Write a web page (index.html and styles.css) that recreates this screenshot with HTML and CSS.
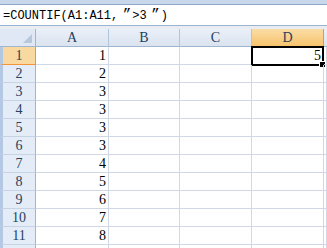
FILE: index.html
```html
<!DOCTYPE html>
<html>
<head>
<meta charset="utf-8">
<link rel="stylesheet" href="styles.css">
</head>
<body>
<div class="topband"></div>
<div class="fbar">=COUNTIF(A1:A11,<span class="fw">”</span>&gt;3<span class="fw">”</span>)</div>
<div class="gap"></div>
<div class="sheet">
  <div class="corner"><span class="tri"></span></div>
  <div class="ch">A</div><div class="ch">B</div><div class="ch">C</div><div class="ch sel">D</div><div class="ch last"></div>

  <div class="rh sel">1</div><div class="c">1</div><div class="c"></div><div class="c"></div><div class="c active">5<span class="handle"></span></div><div class="c"></div>
  <div class="rh">2</div><div class="c">2</div><div class="c"></div><div class="c"></div><div class="c"></div><div class="c"></div>
  <div class="rh">3</div><div class="c">3</div><div class="c"></div><div class="c"></div><div class="c"></div><div class="c"></div>
  <div class="rh">4</div><div class="c">3</div><div class="c"></div><div class="c"></div><div class="c"></div><div class="c"></div>
  <div class="rh">5</div><div class="c">3</div><div class="c"></div><div class="c"></div><div class="c"></div><div class="c"></div>
  <div class="rh">6</div><div class="c">3</div><div class="c"></div><div class="c"></div><div class="c"></div><div class="c"></div>
  <div class="rh">7</div><div class="c">4</div><div class="c"></div><div class="c"></div><div class="c"></div><div class="c"></div>
  <div class="rh">8</div><div class="c">5</div><div class="c"></div><div class="c"></div><div class="c"></div><div class="c"></div>
  <div class="rh">9</div><div class="c">6</div><div class="c"></div><div class="c"></div><div class="c"></div><div class="c"></div>
  <div class="rh">10</div><div class="c">7</div><div class="c"></div><div class="c"></div><div class="c"></div><div class="c"></div>
  <div class="rh">11</div><div class="c">8</div><div class="c"></div><div class="c"></div><div class="c"></div><div class="c"></div>
  <div class="rh"></div><div class="c"></div><div class="c"></div><div class="c"></div><div class="c"></div><div class="c"></div>
</div>
</body>
</html>
```
FILE: styles.css
```css
html, body {
  margin: 0;
  padding: 0;
  background: #ffffff;
  overflow: hidden;
  width: 327px;
  height: 248px;
}
body {
  font-family: "Liberation Mono", monospace;
  font-size: 12px;
  color: #000;
}
.topband {
  height: 4px;
  background: #c9d7ea;
  border-bottom: 1px solid #8da6c6;
}
.fbar {
  height: 20px;
  line-height: 21px;
  padding-left: 3px;
  background: #fff;
  border-bottom: 1px solid #9cb3d2;
  white-space: nowrap;
  font-family: "Liberation Mono", monospace;
  font-size: 12px;
}
.fw {
  display: inline-block;
  width: 14px;
  text-align: right;
  padding-right: 1px;
  box-sizing: border-box;
  font-size: 14px;
}
.gap {
  height: 3px;
  background: #e9edf2;
}
.sheet {
  display: grid;
  grid-template-columns: 36px 73px 71px 72px 72px 1fr;
  grid-auto-rows: 18px;
  font-family: "Liberation Serif", serif;
  font-size: 14px;
}
.corner {
  position: relative;
  background: #dfe8f4;
  border-right: 1px solid #9eb6ce;
  border-bottom: 1px solid #9eb6ce;
  box-sizing: border-box;
}
.tri {
  position: absolute;
  right: 3px;
  bottom: 3px;
  width: 0;
  height: 0;
  border-left: 9px solid transparent;
  border-bottom: 9px solid #b8c8dc;
}
.ch {
  background: linear-gradient(#eaf0f8, #dae3ef);
  border-right: 1px solid #b1c4da;
  border-bottom: 1px solid #9eb6ce;
  box-sizing: border-box;
  text-align: center;
  line-height: 18px;
  color: #27415f;
}
.ch.sel {
  background: linear-gradient(#fbdca6, #f6c46c);
  border-right-color: #f29536;
  border-bottom-color: #f29536;
}
.ch.last { border-right: none; }
.rh {
  background: #e4ecf7;
  border-left: 3px solid #b4c8e3;
  border-right: 1px solid #9eb6ce;
  border-bottom: 1px solid #c5d3e5;
  box-sizing: border-box;
  text-align: center;
  line-height: 18px;
  color: #27415f;
}
.rh.sel {
  background: #f9d99f;
  border-bottom-color: #f29536;
  border-right-color: #f29536;
}
.c {
  position: relative;
  border-right: 1px solid #d0d7e5;
  border-bottom: 1px solid #d0d7e5;
  box-sizing: border-box;
  text-align: right;
  padding-right: 2px;
  line-height: 18px;
}
.c.active {
  border: 2px solid #000;
  line-height: 15px;
  padding-right: 1px;
  margin: -1px 0 -1px -1px;
}
.handle {
  position: absolute;
  right: -4px;
  bottom: -4px;
  width: 5px;
  height: 5px;
  background: #000;
  border: 1px solid #fff;
}
```
